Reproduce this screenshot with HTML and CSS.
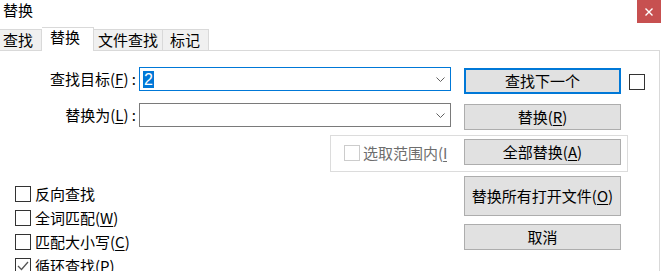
FILE: index.html
```html
<!DOCTYPE html>
<html lang="zh-CN">
<head>
    <meta charset="UTF-8">
    <title>替换</title>
    <link rel="stylesheet" href="styles.css">
</head>
<body>
    <!-- Title bar -->
    <div class="titlebar">
        <span class="title">替换</span>
        <span class="close">
            <svg width="8" height="8" viewBox="0 0 8 8"><path d="M0.5 0.5 L7.5 7.5 M7.5 0.5 L0.5 7.5" stroke="#ffffff" stroke-width="1.4"/></svg>
        </span>
    </div>

    <!-- Tabs -->
    <div class="tabs">
        <span class="tab tab-first">查找</span>
        <span class="tab tab-active">替换</span>
        <span class="tab">文件查找</span>
        <span class="tab">标记</span>
        <span class="tab-fill"></span>
    </div>

    <div class="panel">
        <div class="row row-find">
            <label class="field-label">查找目标(<u>F</u>) :</label>
            <div class="combo combo-focus">
                <span class="combo-text"><span class="sel">2</span></span>
                <svg class="chevron" width="9" height="5" viewBox="0 0 9 5"><path d="M0.5 0.5 L4.5 4.5 L8.5 0.5" fill="none" stroke="#606060" stroke-width="1"/></svg>
            </div>
            <button class="btn btn-default">查找下一个</button>
            <span class="check check-side"></span>
        </div>

        <div class="row row-replace">
            <label class="field-label">替换为(<u>L</u>) :</label>
            <div class="combo">
                <span class="combo-text"></span>
                <svg class="chevron" width="9" height="5" viewBox="0 0 9 5"><path d="M0.5 0.5 L4.5 4.5 L8.5 0.5" fill="none" stroke="#606060" stroke-width="1"/></svg>
            </div>
            <button class="btn">替换(<u>R</u>)</button>
        </div>

        <div class="group">
            <span class="check check-disabled"></span>
            <span class="group-label">选取范围内(<u>I</u>)</span>
            <button class="btn">全部替换(<u>A</u>)</button>
        </div>

        <div class="lower">
            <div class="options">
                <div class="option"><span class="check"></span><span>反向查找</span></div>
                <div class="option"><span class="check"></span><span>全词匹配(<u>W</u>)</span></div>
                <div class="option"><span class="check"></span><span>匹配大小写(<u>C</u>)</span></div>
                <div class="option">
                    <span class="check">
                        <svg width="14" height="14" viewBox="0 0 14 14"><path d="M2 7 L5.5 10.5 L12 3" fill="none" stroke="#555555" stroke-width="1.3"/></svg>
                    </span>
                    <span>循环查找(<u>P</u>)</span>
                </div>
            </div>
            <div class="actions">
                <button class="btn btn-tall">替换所有打开文件(<u>O</u>)</button>
                <button class="btn btn-cancel">取消</button>
            </div>
        </div>
    </div>
</body>
</html>
```

FILE: styles.css
```css
body {
    margin: 0;
    background-color: #ffffff;
    font-family: 'Noto Sans CJK SC', 'Noto Sans', sans-serif;
    font-size: 15px;
    color: #000000;
    width: 661px;
    height: 271px;
    overflow: hidden;
}
u {
    text-decoration-thickness: 1px;
    text-underline-offset: 2px;
}
.titlebar {
    display: flex;
    justify-content: space-between;
    align-items: flex-start;
    height: 27px;
}
.title {
    margin-left: 3px;
    line-height: 19px;
}
.close {
    display: flex;
    align-items: center;
    justify-content: center;
    width: 24px;
    height: 23px;
    background-color: #c75050;
}
.tabs {
    display: flex;
    align-items: flex-end;
    height: 24px;
    width: 660px;
}
.tab {
    box-sizing: border-box;
    height: 22px;
    line-height: 20px;
    padding: 0 0 0 4px;
    white-space: nowrap;
    background-color: #f0f0f0;
    border-top: 1px solid #d9d9d9;
    border-right: 1px solid #d9d9d9;
    border-bottom: 1px solid #d9d9d9;
}
.tab-first {
    width: 42px;
    padding-left: 3px;
}
.tab-active {
    width: 52px;
    height: 24px;
    line-height: 18px;
    padding-left: 8px;
    background-color: #ffffff;
    border-bottom: none;
    border-left: none;
}
.tab:nth-child(3) {
    width: 69px;
    padding-left: 4px;
}
.tab:nth-child(4) {
    width: 46px;
    padding-left: 7px;
}
.tab-fill {
    flex: 1;
    box-sizing: border-box;
    height: 1px;
    background-color: #d9d9d9;
}
.panel {
    box-sizing: border-box;
    width: 660px;
    height: 221px;
    padding-top: 16px;
    border-right: 1px solid #d9d9d9;
}
.row {
    display: flex;
    align-items: flex-start;
}
.row-find {
    height: 36px;
}
.row-replace {
    height: 32px;
}
.field-label {
    width: 136px;
    height: 24px;
    line-height: 24px;
    text-align: right;
    white-space: nowrap;
}
.combo {
    box-sizing: border-box;
    display: flex;
    align-items: center;
    justify-content: space-between;
    width: 312px;
    height: 24px;
    margin-left: 3px;
    padding: 0 5px 0 3px;
    border: 1px solid #7a7a7a;
}
.combo-focus {
    border-color: #0078d7;
}
.combo-text {
    line-height: 17px;
}
.sel {
    background-color: #0078d7;
    color: #ffffff;
    padding: 0 1px;
    font-family: 'Liberation Sans', sans-serif;
    font-size: 16px;
}
.btn {
    box-sizing: border-box;
    width: 157px;
    height: 26px;
    padding: 0;
    background-color: #e1e1e1;
    border: 1px solid #adadad;
    font-family: inherit;
    font-size: 15px;
    color: #000000;
    line-height: 20px;
}
.row .btn {
    margin-left: 13px;
    margin-top: 1px;
}
.btn-default {
    border: 2px solid #0078d7;
}
.check {
    box-sizing: border-box;
    display: flex;
    align-items: center;
    justify-content: center;
    width: 16px;
    height: 16px;
    border: 1px solid #333333;
    background-color: #ffffff;
    flex-shrink: 0;
}
.check-side {
    margin-left: 8px;
    margin-top: 7px;
}
.check-disabled {
    border-color: #cccccc;
    margin-top: 9px;
}
.group {
    box-sizing: border-box;
    display: flex;
    align-items: flex-start;
    width: 298px;
    height: 37px;
    margin-left: 330px;
    padding-left: 13px;
    border: 1px solid #dcdcdc;
}
.group-label {
    width: 84px;
    margin-left: 3px;
    margin-top: 7px;
    line-height: 20px;
    white-space: nowrap;
    overflow: hidden;
    color: #6d6d6d;
}
.group .btn {
    margin-left: 17px;
    margin-top: 3px;
}
.lower {
    display: flex;
}
.options {
    box-sizing: border-box;
    width: 464px;
    padding-left: 15px;
    padding-top: 10px;
}
.option {
    display: flex;
    align-items: center;
    gap: 4px;
    height: 24px;
    line-height: 20px;
    white-space: nowrap;
}
.actions {
    display: flex;
    flex-direction: column;
    padding-top: 4px;
}
.btn-tall {
    height: 40px;
}
.btn-cancel {
    margin-top: 8px;
}
```
